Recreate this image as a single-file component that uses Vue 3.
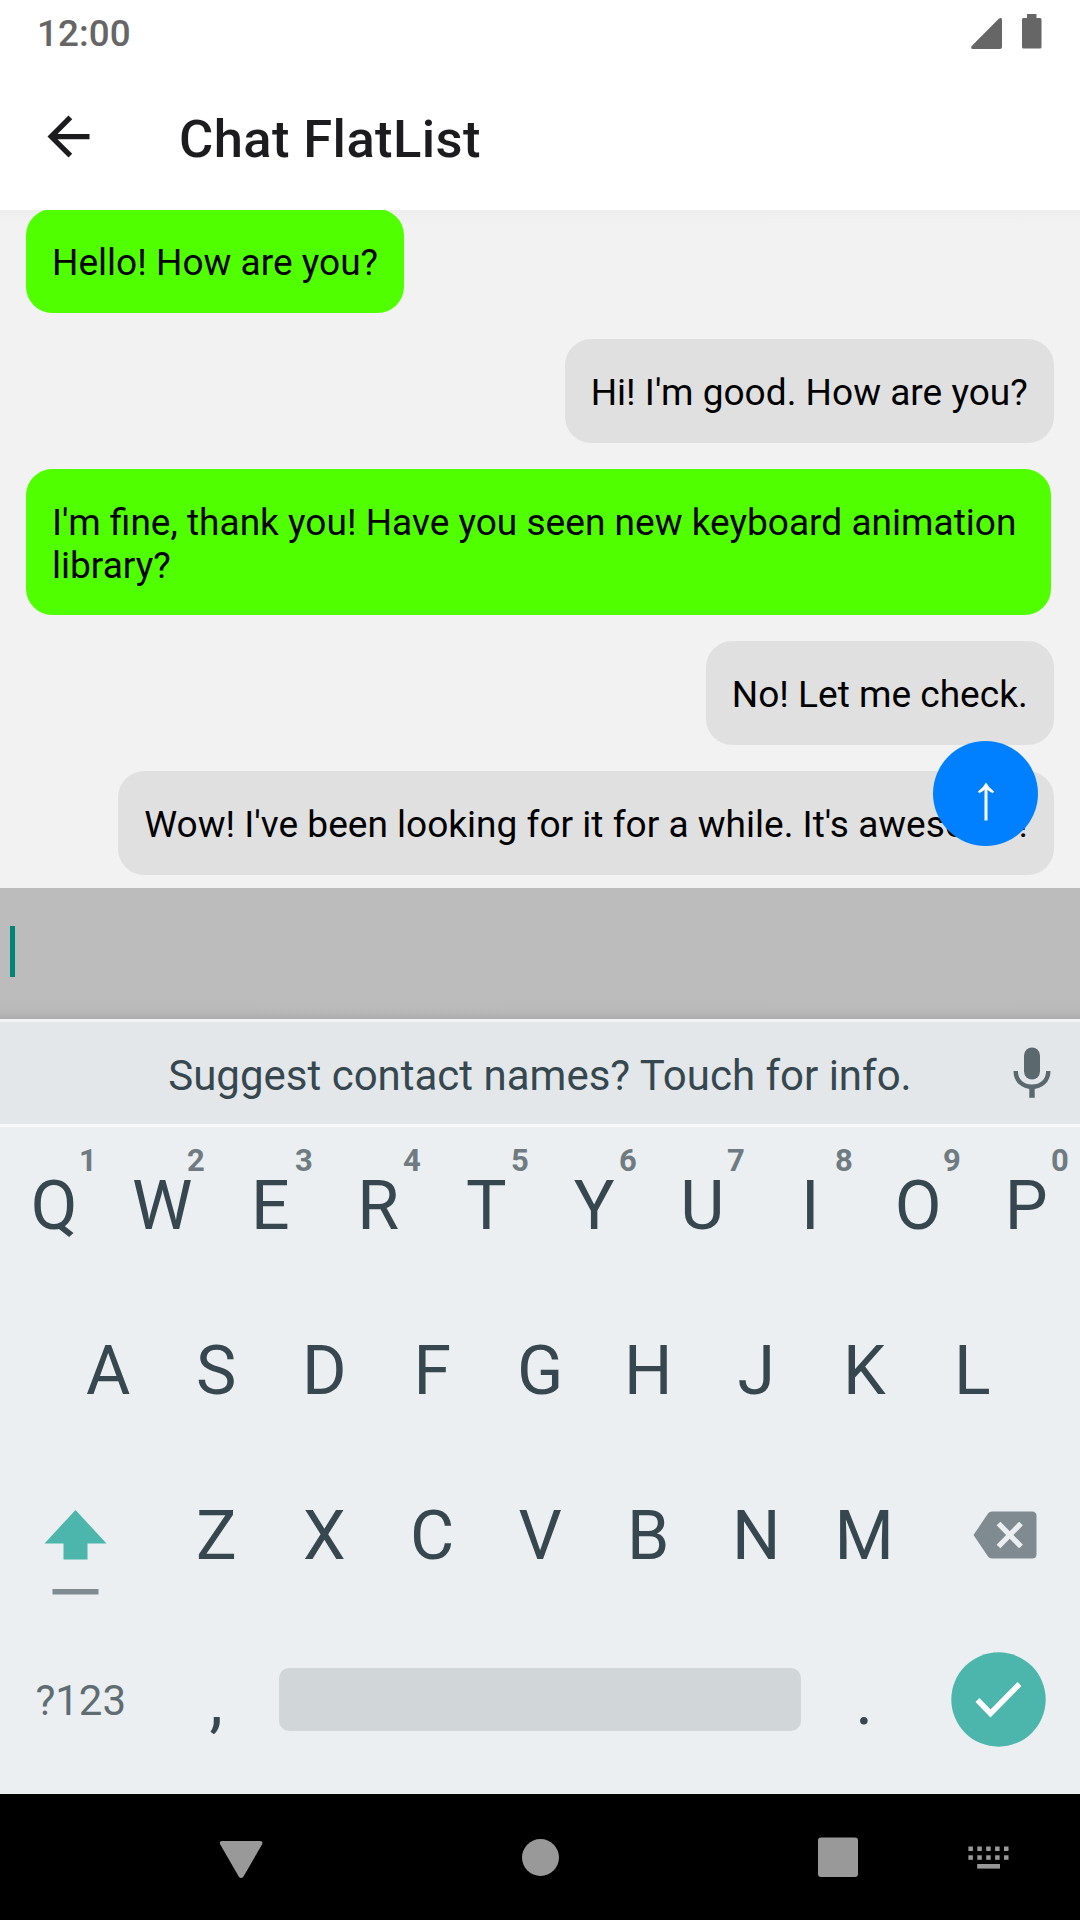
<script setup>
const messages = [
  { text: 'Hello! How are you?', own: true },
  { text: "Hi! I'm good. How are you?", own: false },
  { text: "I'm fine, thank you! Have you seen new keyboard animation library?", own: true, long: true },
  { text: 'No! Let me check.', own: false },
  { text: "Wow! I've been looking for it for a while. It's awesome!", own: false }
]
const topRow = 'QWERTYUIOP'.split('')
const homeRow = 'ASDFGHJKL'.split('')
const bottomRow = 'ZXCVBNM'.split('')
</script>

<template>
  <div class="screen">
    <div class="status">
      <span class="time">12:00</span>
      <span class="status-icons">
        <svg width="31" height="31" viewBox="0 0 31 31"><path d="M28 .6Q31-1.200 31 2V29Q31 31 29 31H2Q-.9 31 .7 28Z" /></svg>
        <svg width="20" height="35" viewBox="0 0 20 35"><path d="M5 0h9.500v4H18q1.500 0 1.500 1.500v27.500q0 1.500-1.500 1.500H1.500Q0 34.500 0 33V5.500Q0 4 1.500 4H5Z" /></svg>
      </span>
    </div>
    <header class="header">
      <svg class="back" viewBox="0 0 24 24"><path d="M20 11H7.830l5.590-5.590L12 4l-8 8 8 8 1.410-1.410L7.830 13H20z" /></svg>
      <h1>Chat FlatList</h1>
    </header>

    <main class="chat">
      <div v-for="m in messages" :key="m.text" class="bubble" :class="{ own: m.own, long: m.long }">{{ m.text }}</div>
      <button class="fab">
        <svg width="18" height="40" viewBox="0 0 18 40">
          <path d="M9 39.500V4" fill="none" stroke="#fff" stroke-width="3" />
          <path d="M9 1.500Q11.500 6.500 17 10.500L15.800 12.300Q12 10.500 9 7.500Q6 10.500 2.200 12.300L1 10.500Q6.500 6.500 9 1.500Z" fill="#fff" />
        </svg>
      </button>
    </main>

    <div class="input"><i class="cursor"></i></div>

    <section class="keyboard">
      <div class="suggest">
        <span>Suggest contact names? Touch for info.</span>
        <svg class="mic" width="38" height="52" viewBox="0 0 38 52">
          <rect x="11" y="0.500" width="16" height="32" rx="8" />
          <path d="M2.700 24C2.700 34 10 39.700 19 39.700S35.300 34 35.300 24" fill="none" stroke="#5b696f" stroke-width="4.400" />
          <rect x="16.300" y="40" width="5.400" height="10.800" />
        </svg>
      </div>
      <div class="row">
        <span v-for="(k, i) in topRow" :key="k" class="key">{{ k }}<sup>{{ (i + 1) % 10 }}</sup></span>
      </div>
      <div class="row">
        <span v-for="k in homeRow" :key="k" class="key">{{ k }}</span>
      </div>
      <div class="row">
        <span class="key wide shift">
          <svg width="64" height="86" viewBox="0 0 64 86">
            <path d="M31.500 0 62.500 33.500H43.500V49.500H19.500V33.500H.5Z" fill="#4db6ac" />
            <rect x="8.500" y="79" width="46" height="5.500" fill="#7f8b90" />
          </svg>
        </span>
        <span v-for="k in bottomRow" :key="k" class="key">{{ k }}</span>
        <span class="key wide delete">
          <svg width="64" height="48" viewBox="0 0 64 48">
            <path d="M19 .5H59Q63.500 .5 63.500 5V43Q63.500 47.500 59 47.500H19Q16.500 47.500 15 45.500L.5 24 15 2.500Q16.500 .5 19 .5Z" fill="#7f8b90" />
            <path d="M25.500 12.500 48 35.500M48 12.500 25.500 35.500" stroke="#ebeff2" stroke-width="5.300" />
          </svg>
        </span>
      </div>
      <div class="row">
        <span class="key wide symbols">?123</span>
        <span class="key">,</span>
        <span class="space"><i></i></span>
        <span class="key">.</span>
        <span class="key wide enter">
          <svg width="95" height="95" viewBox="0 0 95 95">
            <circle cx="47.500" cy="47.500" r="47.200" fill="#4db6ac" />
            <path d="M26.500 48 39.500 61.500 68.500 32" fill="none" stroke="#fff" stroke-width="5.500" />
          </svg>
        </span>
      </div>
    </section>

    <nav class="nav">
      <svg width="1080" height="126" viewBox="0 0 1080 126" fill="#999">
        <path d="M222 47H260Q263.500 47 262 50.500L243.500 82.500Q241 85.500 238.700 82.500L220.300 50.500Q218.800 47 222 47Z" />
        <circle cx="540.500" cy="63.500" r="18.500" />
        <rect x="818" y="43.500" width="40" height="39.500" rx="3" />
        <g v-for="n in 5" :key="n">
          <rect :x="959.5 + n * 8.900" y="52.500" width="4.500" height="4.500" />
          <rect :x="959.5 + n * 8.900" y="61.300" width="4.500" height="4.500" />
        </g>
        <rect x="977.200" y="70" width="22.800" height="4.600" />
      </svg>
    </nav>
  </div>
</template>

<style>
body { margin: 0; }
</style>

<style scoped>
.screen { width: 1080px; height: 1920px; display: flex; flex-direction: column; overflow: hidden; background: #fff; font-family: Roboto, sans-serif; }
.screen > * { flex-shrink: 0; }
svg { display: block; }
.status { height: 63px; display: flex; justify-content: space-between; padding: 0 38px 0 37px; color: #666; }
.time { font-size: 36.75px; font-weight: 500; letter-spacing: .1px; line-height: 68px; }
.status-icons { display: flex; align-items: flex-end; gap: 20px; height: 48.500px; fill: #666; }
.header { height: 147px; display: flex; align-items: center; padding-left: 37px; }
.back { width: 63px; height: 63px; fill: #1c1c1e; }
h1 { margin: 4px 0 0 79px; font-size: 52.500px; font-weight: 500; letter-spacing: .4px; line-height: 62px; color: #1c1c1e; }
.chat { position: relative; height: 678px; display: flex; flex-direction: column; align-items: flex-end; justify-content: flex-end; gap: 26px; padding: 0 26px 13px; box-sizing: border-box; overflow: hidden; background: linear-gradient(#eee, #f2f2f2 14px); }
.bubble { flex-shrink: 0; box-sizing: border-box; max-width: 1025px; padding: 32px 26.300px 29px 26px; border-radius: 26.250px; background: #e0e0e0; color: #000; font-size: 37.050px; line-height: 43px; }
.bubble.own { align-self: flex-start; background: #50ff00; }
.bubble.long { padding-bottom: 28px; }
.fab { position: absolute; right: 42px; bottom: 42px; width: 105px; height: 105px; padding: 14px 0 0; border: 0; border-radius: 50%; display: flex; align-items: center; justify-content: center; background: #0080ff; }
.input { height: 131px; box-sizing: border-box; padding: 38px 0 0 10px; background: linear-gradient(#bcbcbc 0 112px, #b8b8b8 124px, #acacac); }
.cursor { display: block; width: 5px; height: 51px; background: #008577; }
.keyboard { height: 775px; background: #ebeff2; color: #37474f; }
.suggest { position: relative; height: 102px; border-top: 3px solid #f2f3f4; border-bottom: 3px solid #f6f8f9; background: #e3e7ea; text-align: center; font-size: 42px; line-height: 107px; }
.mic { position: absolute; left: 1013px; top: 25px; fill: #5b696f; }
.row { height: 165px; display: flex; justify-content: center; }
.key { position: relative; width: 108px; text-align: center; text-indent: .5px; font-size: 68px; line-height: 159px; }
.key sup { position: absolute; left: 68px; width: 40px; top: 16px; text-indent: 0; font-size: 31px; line-height: 36px; font-weight: 700; color: #6f7b80; }
.wide { width: 162px; display: flex; justify-content: center; box-sizing: border-box; text-indent: 0; }
.shift { padding: 53px 11px 0 0; }
.delete { padding: 54px 0 0 11px; }
.symbols { font-size: 42px; line-height: 158px; color: #5f6d73; padding-right: .5px; }
.space { width: 540px; padding: 46px 9px 0; box-sizing: border-box; }
.space i { display: block; height: 63px; border-radius: 10px; background: #d1d6d9; }
.enter { padding: 30px 2px 0 0; }
.nav { height: 126px; background: #000; }
</style>
